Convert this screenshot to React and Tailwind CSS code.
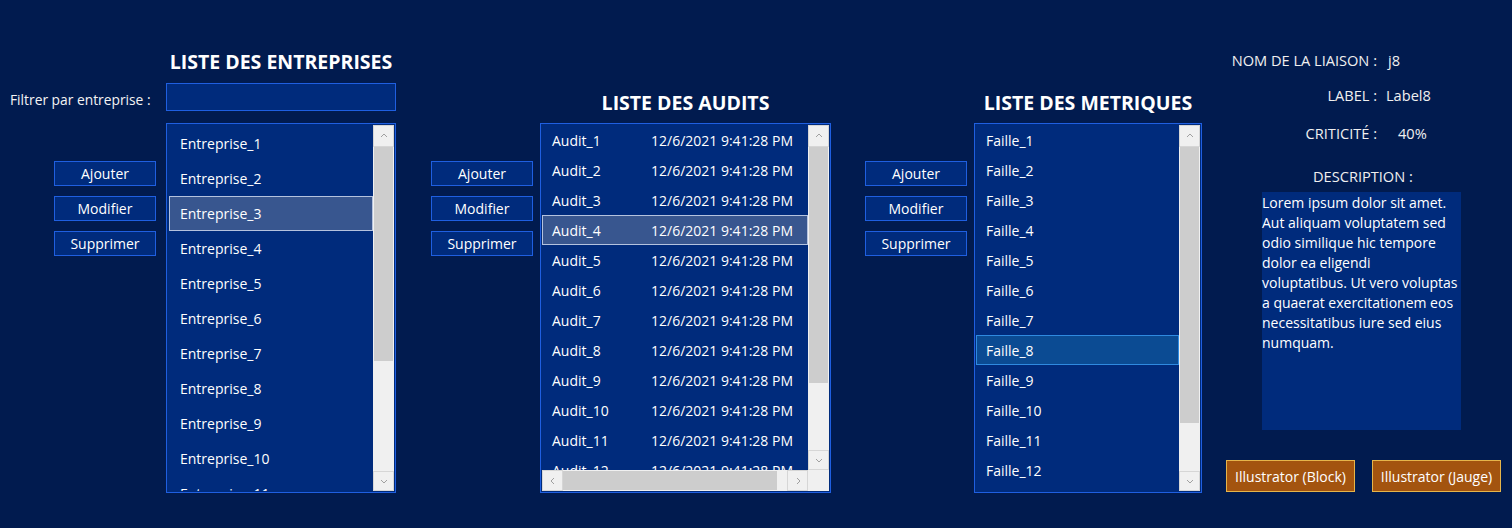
const font = { fontFamily: '"Open Sans", "Noto Sans", sans-serif' };

const entreprises = Array.from({ length: 11 }, (_, i) => `Entreprise_${i + 1}`);
const audits = Array.from({ length: 12 }, (_, i) => `Audit_${i + 1}`);
const failles = Array.from({ length: 12 }, (_, i) => `Faille_${i + 1}`);

const Chevron = ({ dir }) => {
  const d = {
    up: 'M2 6 L5 3 L8 6',
    down: 'M2 4 L5 7 L8 4',
    left: 'M6 2 L3 5 L6 8',
    right: 'M4 2 L7 5 L4 8',
  }[dir];
  return (
    <svg width="10" height="10" viewBox="0 0 10 10">
      <path d={d} fill="none" stroke="#a0a0a0" strokeWidth="1" />
    </svg>
  );
};

const ArrowBtn = ({ dir, className }) => (
  <div className={`flex items-center justify-center bg-[#f0f0f0] border border-[#d6d6d6] ${className}`}>
    <Chevron dir={dir} />
  </div>
);

const VScroll = ({ thumb }) => (
  <div className="w-[21px] h-full flex flex-col bg-[#f0f0f0]">
    <ArrowBtn dir="up" className="h-[22px] shrink-0" />
    <div className="flex-1 flex flex-col">
      <div className="bg-[#cdcdcd] mx-[1px]" style={{ height: thumb }} />
    </div>
    <ArrowBtn dir="down" className="h-[20px] shrink-0" />
  </div>
);

const ActionButtons = () => (
  <div className="flex flex-col gap-[10px] w-[102px]">
    {['Ajouter', 'Modifier', 'Supprimer'].map((b) => (
      <button
        key={b}
        className="h-[25px] bg-[#002b7c] border border-[#1f5fe0] text-[14px] text-white leading-none"
      >
        {b}
      </button>
    ))}
  </div>
);

const Title = ({ children }) => (
  <h2 className="text-[19.5px] font-bold text-white text-center leading-[24px] whitespace-nowrap">{children}</h2>
);

export default function App() {
  return (
    <div style={font} className="w-[1512px] h-[528px] bg-[#011b4f] text-white flex overflow-hidden">
      {/* Filter label + left buttons */}
      <div className="w-[166px] flex flex-col">
        <div className="mt-[90px] pl-[10px] text-[13.8px] leading-[20px] text-[#f4f4f4] whitespace-nowrap">
          Filtrer par entreprise :
        </div>
        <div className="mt-[51px] ml-[54px]">
          <ActionButtons />
        </div>
      </div>

      {/* Entreprises */}
      <div className="w-[230px] flex flex-col">
        <div className="mt-[50px]">
          <Title>LISTE DES ENTREPRISES</Title>
        </div>
        <div className="mt-[9px] h-[28px] bg-[#002b7c] border border-[#1f5fe0]" />
        <div className="mt-[12px] h-[370px] border border-[#1f5fe0] bg-[#002b7c] p-[1px] flex">
          <div className="flex-1 overflow-hidden pt-[1px] pl-[1px]">
            {entreprises.map((e, i) => (
              <div
                key={e}
                className={`h-[35px] flex items-center pl-[10px] text-[14px] border ${
                  i === 2 ? 'bg-[#38568f] border-[#b4c2de]' : 'border-transparent'
                }`}
              >
                {e}
              </div>
            ))}
          </div>
          <VScroll thumb={214} />
        </div>
      </div>

      <div className="ml-[35px] mt-[161px]">
        <ActionButtons />
      </div>

      {/* Audits */}
      <div className="ml-[7px] w-[291px] flex flex-col">
        <div className="mt-[91px]">
          <Title>LISTE DES AUDITS</Title>
        </div>
        <div className="mt-[8px] h-[370px] border border-[#1f5fe0] bg-[#002b7c] p-[1px] grid grid-cols-[1fr_21px] grid-rows-[1fr_21px]">
          <div className="overflow-hidden">
            {audits.map((a, i) => (
              <div
                key={a}
                className={`h-[30px] flex items-center pl-[9px] text-[14px] border ${
                  i === 3 ? 'bg-[#38568f] border-[#b4c2de]' : 'border-transparent'
                }`}
              >
                <span className="w-[99px]">{a}</span>
                <span>12/6/2021 9:41:28 PM</span>
              </div>
            ))}
          </div>
          <VScroll thumb={236} />
          <div className="flex bg-[#f0f0f0]">
            <ArrowBtn dir="left" className="w-[21px] shrink-0" />
            <div className="flex-1 flex">
              <div className="bg-[#cdcdcd] my-[1px] w-[214px]" />
            </div>
            <ArrowBtn dir="right" className="w-[21px] shrink-0" />
          </div>
          <div className="bg-[#f0f0f0]" />
        </div>
      </div>

      <div className="ml-[34px] mt-[161px]">
        <ActionButtons />
      </div>

      {/* Metriques */}
      <div className="ml-[7px] w-[228px] flex flex-col">
        <div className="mt-[91px]">
          <Title>LISTE DES METRIQUES</Title>
        </div>
        <div className="mt-[8px] h-[370px] border border-[#1f5fe0] bg-[#002b7c] p-[1px] flex">
          <div className="flex-1 overflow-hidden">
            {failles.map((f, i) => (
              <div
                key={f}
                className={`h-[30px] flex items-center pl-[9px] text-[14px] border ${
                  i === 7 ? 'bg-[#0b4b93] border-[#2f8ae0]' : 'border-transparent'
                }`}
              >
                {f}
              </div>
            ))}
          </div>
          <VScroll thumb={276} />
        </div>
      </div>

      {/* Details */}
      <div className="ml-[24px] w-[276px] flex flex-col">
        <div className="mt-[50px] grid grid-cols-[151px_1fr] gap-x-[9px] text-[14.6px] text-[#f0f0f0] leading-[20px] whitespace-nowrap">
          <div className="text-right">NOM DE LA LIAISON :</div>
          <div className="pl-[2px]">j8</div>
          <div className="text-right mt-[15px]">LABEL :</div>
          <div className="mt-[15px]">Label8</div>
          <div className="text-right mt-[18px]">CRITICITÉ :</div>
          <div className="mt-[18px] pl-[12px]">40%</div>
        </div>
        <div className="mt-[23px] pl-[87px] text-[14.6px] leading-[20px] text-[#f0f0f0]">DESCRIPTION :</div>
        <div className="mt-[6px] ml-[36px] w-[199px] h-[238px] bg-[#002b7c] text-[14px] leading-[20px] pt-[1px] pr-[2px]">
          Lorem ipsum dolor sit amet. Aut aliquam voluptatem sed odio similique hic tempore dolor ea eligendi
          voluptatibus. Ut vero voluptas a quaerat exercitationem eos necessitatibus iure sed eius numquam.
        </div>
        <div className="mt-[30px] flex gap-[17px]">
          {['Illustrator (Block)', 'Illustrator (Jauge)'].map((b) => (
            <button
              key={b}
              className="h-[32px] w-[129px] bg-[#a3540f] border border-[#e6b54a] text-[14px] text-white"
            >
              {b}
            </button>
          ))}
        </div>
      </div>
    </div>
  );
}
